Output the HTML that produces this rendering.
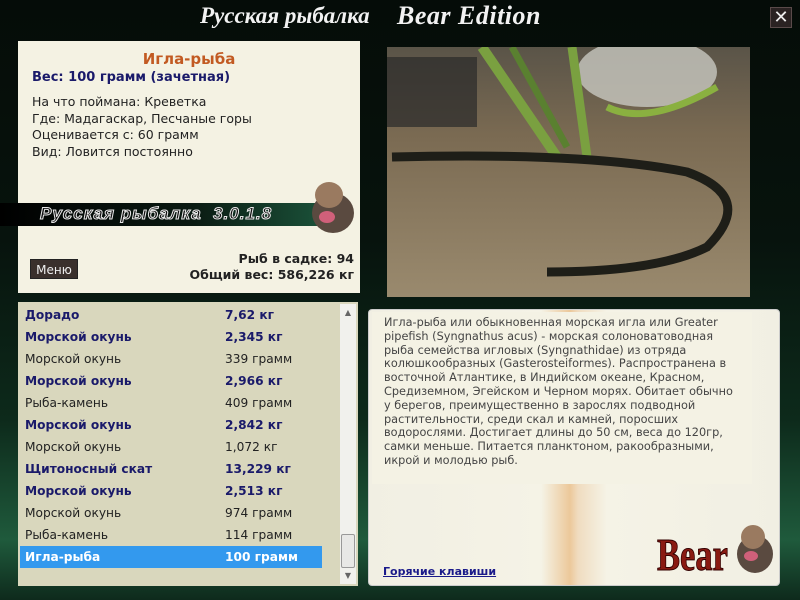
<!DOCTYPE html>
<html><head><meta charset="utf-8"><style>
*{margin:0;padding:0;box-sizing:border-box}
body{width:800px;height:600px;overflow:hidden;position:relative;font-family:"DejaVu Sans","Liberation Sans",sans-serif;
background:linear-gradient(180deg,#050c08 0%,#07130d 40%,#0d2a1b 70%,#1f5a3c 90%,#0e2a1c 100%);}
.t1{position:absolute;left:200px;top:3px;font-family:"Liberation Serif",serif;font-style:italic;font-weight:bold;font-size:23px;color:#f2f2f2}
.t2{position:absolute;left:397px;top:1px;font-family:"Liberation Serif",serif;font-style:italic;font-weight:bold;font-size:26px;color:#f2f2f2;letter-spacing:0.5px}
.x{position:absolute;left:770px;top:7px;width:22px;height:21px;background:#2a2222;border:1px solid #5a4a4a;color:#eee;font-size:18px;line-height:19px;text-align:center}
.top{position:absolute;left:18px;top:41px;width:342px;height:252px;background:#f4f2e3}
.name{position:absolute;left:0;width:342px;top:9px;text-align:center;color:#c25a22;font-weight:bold;font-size:15px}
.wt{position:absolute;left:14px;top:29px;color:#1a1a6a;font-weight:bold;font-size:13px}
.info{position:absolute;left:14px;top:53px;font-size:12.5px;line-height:16.5px;color:#222}
.band{position:absolute;left:-18px;top:162px;width:320px;height:23px;background:linear-gradient(90deg,#000 0%,#0a1a12 60%,#1a5038 100%)}
.band span{position:absolute;left:40px;top:1px;font-family:"Liberation Sans",sans-serif;font-style:italic;font-weight:bold;font-size:17px;color:#111;-webkit-text-stroke:1px #e8e8e8;letter-spacing:1px}
.menu{position:absolute;left:12px;top:218px;width:48px;height:20px;background:#3a302c;color:#eee;font-size:12px;line-height:20px;text-align:center;border:1px solid #222}
.stat{position:absolute;right:6px;top:210px;text-align:right;font-weight:bold;font-size:12.5px;line-height:16px;color:#222}
.photo{position:absolute;left:387px;top:47px;width:363px;height:250px}
.list{position:absolute;left:18px;top:302px;width:340px;height:284px;background:#d9d7bd}
.row{position:absolute;left:2px;width:302px;height:22px;font-size:12.2px;line-height:22px;color:#222}
.row b{color:#1a1a6a}
.row .a{position:absolute;left:5px}.row .b{position:absolute;left:205px}
.sel{background:#3399ee}.sel b{color:#fff}
.sb{position:absolute;right:2px;top:2px;width:16px;height:280px;background:#f1f1ed;font-size:8px;color:#666;text-align:center}
.thumb{position:absolute;left:1px;top:230px;width:14px;height:34px;background:#e8e8e6;border:1px solid #999;border-radius:2px}
.book{position:absolute;left:368px;top:309px;width:412px;height:277px;background:linear-gradient(90deg,#f1efe3 0%,#f5f3e6 42%,#ecc89a 49%,#f0dcc0 51%,#f5f3e6 58%,#f1efe3 100%);border:1px solid #ccc;border-radius:4px}
.book .pg{position:absolute;left:3px;top:2px;width:380px;height:172px;background:#f4f2e4}
.desc{position:absolute;left:15px;top:6px;font-size:11.3px;line-height:13.8px;color:#444;white-space:nowrap}
.hot{position:absolute;left:14px;top:255px;font-size:11px;font-weight:bold;color:#1a1a8a;text-decoration:underline}
.bear{position:absolute;left:288px;top:218px;font-family:"Liberation Serif",serif;font-weight:bold;font-size:46px;color:#8a1a12;-webkit-text-stroke:1px #300;transform:scaleX(.75);transform-origin:left}
</style></head><body>
<div class="t1">Русская рыбалка</div>
<div class="t2">Bear Edition</div>
<div class="x">✕</div>
<div class="top">
<div class="name">Игла-рыба</div>
<div class="wt">Вес: 100 грамм (зачетная)</div>
<div class="info">На что поймана: Креветка<br>Где: Мадагаскар, Песчаные горы<br>Оценивается с: 60 грамм<br>Вид: Ловится постоянно</div>
<div class="band"><span>Русская рыбалка&nbsp; 3.0.1.8</span></div>
<svg style="position:absolute;left:287px;top:136px" width="54" height="58"><ellipse cx="28" cy="36" rx="21" ry="20" fill="#5a4a40"/><ellipse cx="24" cy="18" rx="14" ry="13" fill="#9a7a60"/><ellipse cx="22" cy="40" rx="8" ry="6" fill="#d0607a"/></svg>
<div class="menu">Меню</div>
<div class="stat">Рыб в садке: 94<br>Общий вес: 586,226 кг</div>
</div>
<svg class="photo" viewBox="0 0 363 250">
<defs><linearGradient id="g" x1="0" y1="0" x2="0" y2="1"><stop offset="0" stop-color="#5a5448"/><stop offset=".35" stop-color="#7a6a52"/><stop offset="1" stop-color="#9a8a6e"/></linearGradient></defs>
<rect width="363" height="250" fill="url(#g)"/>
<rect x="0" y="10" width="90" height="70" fill="#2a2a2a" opacity=".7"/>
<ellipse cx="260" cy="25" rx="70" ry="35" fill="#c8c8c0" opacity=".8"/>
<path d="M95 0 L170 110" stroke="#7aa040" stroke-width="10"/><path d="M125 0 L180 100" stroke="#5a8030" stroke-width="7"/>
<path d="M185 0 L200 110" stroke="#7aa040" stroke-width="9"/><path d="M220 60 Q260 80 330 40" stroke="#8ab040" stroke-width="7" fill="none"/>
<path d="M5 110 Q200 105 300 125 Q370 150 320 200 Q270 225 160 225" stroke="#1e1e18" stroke-width="9" fill="none"/>
</svg>
<div class="list">
<div class="row" style="top:2px"><b class="a">Дорадо</b><b class="b">7,62 кг</b></div>
<div class="row" style="top:24px"><b class="a">Морской окунь</b><b class="b">2,345 кг</b></div>
<div class="row" style="top:46px"><span class="a">Морской окунь</span><span class="b">339 грамм</span></div>
<div class="row" style="top:68px"><b class="a">Морской окунь</b><b class="b">2,966 кг</b></div>
<div class="row" style="top:90px"><span class="a">Рыба-камень</span><span class="b">409 грамм</span></div>
<div class="row" style="top:112px"><b class="a">Морской окунь</b><b class="b">2,842 кг</b></div>
<div class="row" style="top:134px"><span class="a">Морской окунь</span><span class="b">1,072 кг</span></div>
<div class="row" style="top:156px"><b class="a">Щитоносный скат</b><b class="b">13,229 кг</b></div>
<div class="row" style="top:178px"><b class="a">Морской окунь</b><b class="b">2,513 кг</b></div>
<div class="row" style="top:200px"><span class="a">Морской окунь</span><span class="b">974 грамм</span></div>
<div class="row" style="top:222px"><span class="a">Рыба-камень</span><span class="b">114 грамм</span></div>
<div class="row sel" style="top:244px"><b class="a">Игла-рыба</b><b class="b">100 грамм</b></div>
<div class="sb"><div style="position:absolute;top:4px;width:16px">▲</div><div class="thumb"></div><div style="position:absolute;bottom:4px;width:16px">▼</div></div>
</div>
<div class="book"><div class="pg"></div>
<div class="desc">Игла-рыба или обыкновенная морская игла или Greater<br>pipefish (Syngnathus acus) - морская солоноватоводная<br>рыба семейства игловых (Syngnathidae) из отряда<br>колюшкообразных (Gasterosteiformes). Распространена в<br>восточной Атлантике, в Индийском океане, Красном,<br>Средиземном, Эгейском и Черном морях. Обитает обычно<br>у берегов, преимущественно в зарослях подводной<br>растительности, среди скал и камней, поросших<br>водорослями. Достигает длины до 50 см, веса до 120гр,<br>самки меньше. Питается планктоном, ракообразными,<br>икрой и молодью рыб.</div>
<div class="bear">Bear</div>
<svg style="position:absolute;left:364px;top:210px" width="44" height="56"><ellipse cx="22" cy="34" rx="18" ry="19" fill="#5a4a40"/><ellipse cx="20" cy="17" rx="12" ry="12" fill="#9a7a60"/><ellipse cx="18" cy="36" rx="7" ry="5" fill="#d0607a"/></svg>
<div class="hot">Горячие клавиши</div>
</div>
</body></html>
